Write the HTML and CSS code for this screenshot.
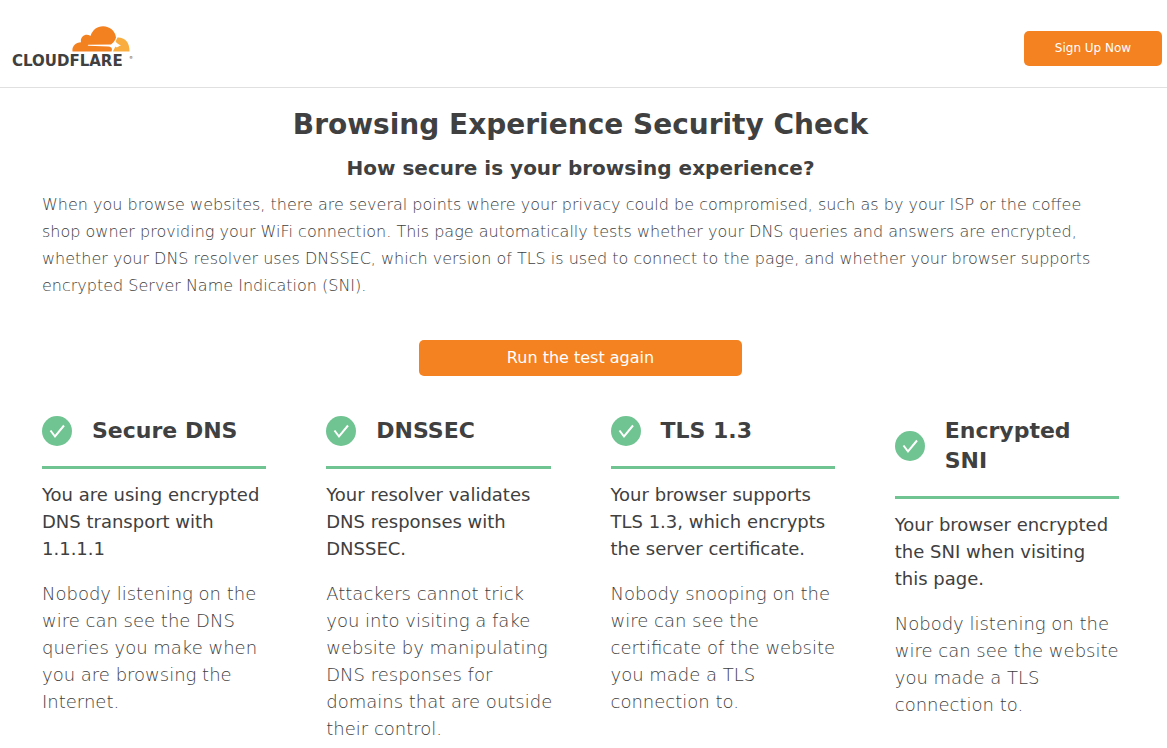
FILE: index.html
```html
<!DOCTYPE html>
<html lang="en">
<head>
<meta charset="utf-8">
<title>Browsing Experience Security Check</title>
<link rel="stylesheet" href="styles.css">
</head>
<body>
<header class="topbar">
  <a class="brand" href="#" aria-label="Cloudflare">
    <svg class="cloud" viewBox="0 0 58 26" aria-hidden="true">
      <path fill="#f48120" d="M39.500 25.500L.5 25.500C-.2 21 3 16.300 9 16.300C7.800 11 13.500 6.500 18.500 10C20.500 4 25 .3 31 .3C38 .3 43.500 5.500 44 11.500C43.500 13.500 42 16.500 39 18.500L16.500 18.700Q15 19.200 16.500 19.700L36 20.500C40 21 40.500 22.500 39.500 25.500Z"/>
      <path fill="#faad3f" d="M45.500 11.500C52 11 58 16 57.500 25.500L41 25.500C42 23 43 21.500 43.500 20.500C44.500 22.500 45.500 20.500 49 19.500C46 18 44.500 17 43.500 15.500Z"/>
    </svg>
    <span class="wordmark">CLOUDFLARE<span class="mark">®</span></span>
  </a>
  <a class="signup" href="#">Sign Up Now</a>
</header>
<main class="page">
  <h1 class="title">Browsing Experience Security Check</h1>
  <h2 class="subtitle">How secure is your browsing experience?</h2>
  <p class="intro">When you browse websites, there are several points where your privacy could be compromised, such as by your ISP or the coffee shop owner providing your WiFi connection. This page automatically tests whether your DNS queries and answers are encrypted, whether your DNS resolver uses DNSSEC, which version of TLS is used to connect to the page, and whether your browser supports encrypted Server Name Indication (SNI).</p>
  <button class="run" type="button">Run the test again</button>
  <div class="results">
    <section class="result">
      <div class="result-head"><svg class="check" viewBox="0 0 30 30" aria-hidden="true"><circle cx="15" cy="15" r="15"/><path d="M8.500 14.500L13 20.500L22 9.500"/></svg><h3 class="result-title">Secure DNS</h3></div>
      <p class="status">You are using encrypted DNS transport with 1.1.1.1</p>
      <p class="detail">Nobody listening on the wire can see the DNS queries you make when you are browsing the Internet.</p>
    </section>
    <section class="result">
      <div class="result-head"><svg class="check" viewBox="0 0 30 30" aria-hidden="true"><circle cx="15" cy="15" r="15"/><path d="M8.500 14.500L13 20.500L22 9.500"/></svg><h3 class="result-title">DNSSEC</h3></div>
      <p class="status">Your resolver validates DNS responses with DNSSEC.</p>
      <p class="detail">Attackers cannot trick you into visiting a fake website by manipulating DNS responses for domains that are outside their control.</p>
    </section>
    <section class="result">
      <div class="result-head"><svg class="check" viewBox="0 0 30 30" aria-hidden="true"><circle cx="15" cy="15" r="15"/><path d="M8.500 14.500L13 20.500L22 9.500"/></svg><h3 class="result-title">TLS 1.3</h3></div>
      <p class="status">Your browser supports TLS 1.3, which encrypts the server certificate.</p>
      <p class="detail">Nobody snooping on the wire can see the certificate of the website you made a TLS connection to.</p>
    </section>
    <section class="result">
      <div class="result-head"><svg class="check" viewBox="0 0 30 30" aria-hidden="true"><circle cx="15" cy="15" r="15"/><path d="M8.500 14.500L13 20.500L22 9.500"/></svg><h3 class="result-title">Encrypted SNI</h3></div>
      <p class="status">Your browser encrypted the SNI when visiting this page.</p>
      <p class="detail">Nobody listening on the wire can see the website you made a TLS connection to.</p>
    </section>
  </div>
</main>
</body>
</html>
```
FILE: styles.css
```css
* { box-sizing: border-box; }
body { margin: 0; background: #fff; color: #404041; font-family: "DejaVu Sans", sans-serif; }
h1, h2, h3, p { margin: 0; }
.topbar { display: flex; justify-content: space-between; align-items: center; padding: 26px 5px 17px 12px; border-bottom: 1px solid #e0e0e0; }
.brand { display: flex; flex-direction: column; width: 121px; color: #404041; text-decoration: none; }
.cloud { width: 58px; height: 26px; margin-left: 60px; }
.wordmark { display: flex; justify-content: space-between; font-size: 15px; line-height: 18px; font-weight: 700; }
.mark { font-size: 4px; line-height: 12px; font-weight: 400; }
.signup { width: 138px; border-radius: 5px; background: #f58220; color: #fff; font-size: 12px; line-height: 35px; text-align: center; text-decoration: none; }
.page { display: flex; flex-direction: column; padding: 17px 48px 0 42px; }
.title { font-size: 28px; line-height: 40px; text-align: center; }
.subtitle { margin-top: 11px; font-size: 20px; line-height: 24px; text-align: center; }
.intro { margin-top: 11px; font-size: 16px; line-height: 27px; font-weight: 200; }
.run { align-self: center; width: 30%; margin-top: 41px; padding: 0; border: 0; border-radius: 5px; background: #f58220; color: #fff; font: 16px/36px "DejaVu Sans", sans-serif; }
.results { display: grid; grid-template-columns: repeat(4, 1fr); gap: 60px; margin-top: 40px; }
.result-head { display: flex; align-items: center; gap: 20px; padding-bottom: 20px; border-bottom: 3px solid #70c492; }
.check { flex: none; width: 30px; height: 30px; fill: #70c492; }
.check path { fill: none; stroke: #fff; stroke-width: 2; }
.result-title { font-size: 22px; line-height: 30px; }
.status { margin-top: 12px; font-size: 18px; line-height: 27px; }
.detail { margin-top: 18px; margin-right: -8px; font-size: 18px; line-height: 27px; font-weight: 200; }
```
